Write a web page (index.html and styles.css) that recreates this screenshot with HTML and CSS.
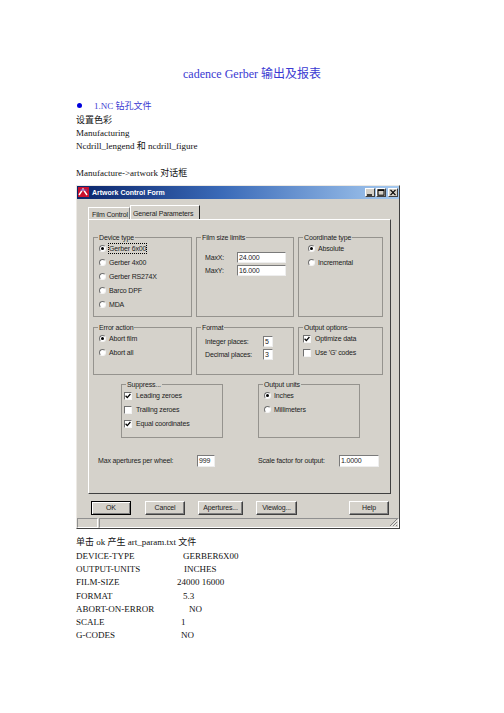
FILE: index.html
```html
<!DOCTYPE html>
<html lang="zh-CN">
<head>
  <meta charset="UTF-8" />
  <meta name="viewport" content="width=device-width, initial-scale=1.0"/>
  <title>cadence Gerber 输出及报表</title>
  <link rel="stylesheet" href="styles.css">
</head>
<body>

  <div class="page">
    <h1 class="doc-title">cadence Gerber 输出及报表</h1>

    <ul class="bullets">
      <li>1.NC 钻孔文件</li>
    </ul>
    <p class="line">设置色彩</p>
    <p class="line">Manufacturing</p>
    <p class="line">Ncdrill_lengend 和 ncdrill_figure</p>
    <p class="line"></p>
    <p class="line">Manufacture-&gt;artwork 对话框</p>

    <!-- Artwork dialog -->
    <div class="window">
      <div class="titlebar">
        <svg class="app-icon" width="11" height="10" viewBox="0 0 11 10">
          <rect x="0" y="0" width="11" height="10" fill="#c8102e"/>
          <path d="M1 8 L5 2 L9 8" stroke="#fff" stroke-width="1.4" fill="none"/>
          <path d="M2 3 H9" stroke="#7a3fa0" stroke-width="1.2"/>
        </svg>
        <span class="title-text">Artwork Control Form</span>
        <div class="win-controls">
          <span class="ctl">
            <svg width="8" height="7" viewBox="0 0 8 7"><path d="M1 6 H6" stroke="#000" stroke-width="1.4"/></svg>
          </span>
          <span class="ctl">
            <svg width="8" height="7" viewBox="0 0 8 7"><rect x="1" y="0.8" width="6" height="5.4" stroke="#000" stroke-width="1" fill="none"/><path d="M1 1.3 H7" stroke="#000" stroke-width="1.2"/></svg>
          </span>
          <span class="ctl close">
            <svg width="8" height="7" viewBox="0 0 8 7"><path d="M1.5 0.8 L6.5 6.2 M6.5 0.8 L1.5 6.2" stroke="#000" stroke-width="1.2"/></svg>
          </span>
        </div>
      </div>

      <div class="tabs">
        <span class="tab">Film Control</span>
        <span class="tab active">General Parameters</span>
      </div>

      <div class="panel">
        <div class="row row-top">
          <fieldset class="group w-wide">
            <legend>Device type</legend>
            <div class="opt"><span class="radio on"></span><span class="focus">Gerber 6x00</span></div>
            <div class="opt"><span class="radio"></span>Gerber 4x00</div>
            <div class="opt"><span class="radio"></span>Gerber RS274X</div>
            <div class="opt"><span class="radio"></span>Barco DPF</div>
            <div class="opt"><span class="radio"></span>MDA</div>
          </fieldset>
          <fieldset class="group w-mid">
            <legend>Film size limits</legend>
            <div class="fields film">
              <div class="field"><span class="field-label w-film">MaxX:</span><span class="input w-long">24.000</span></div>
              <div class="field"><span class="field-label w-film">MaxY:</span><span class="input w-long">16.000</span></div>
            </div>
          </fieldset>
          <fieldset class="group w-narrow">
            <legend>Coordinate type</legend>
            <div class="indent">
              <div class="opt"><span class="radio on"></span>Absolute</div>
              <div class="opt"><span class="radio"></span>Incremental</div>
            </div>
          </fieldset>
        </div>

        <div class="row row-mid">
          <fieldset class="group w-wide">
            <legend>Error action</legend>
            <div class="opt"><span class="radio on"></span>Abort film</div>
            <div class="opt"><span class="radio"></span>Abort all</div>
          </fieldset>
          <fieldset class="group w-mid">
            <legend>Format</legend>
            <div class="fields format">
              <div class="field"><span class="field-label w-format">Integer places:</span><span class="input w-tiny">5</span></div>
              <div class="field"><span class="field-label w-format">Decimal places:</span><span class="input w-tiny">3</span></div>
            </div>
          </fieldset>
          <fieldset class="group w-narrow">
            <legend>Output options</legend>
            <div class="pull">
              <div class="opt"><span class="check on"><svg width="6" height="6" viewBox="0 0 6 6"><path d="M0.6 2.8 L2.3 4.6 L5.4 1" stroke="#000" stroke-width="1.3" fill="none"/></svg></span>Optimize data</div>
              <div class="opt"><span class="check"></span>Use 'G' codes</div>
            </div>
          </fieldset>
        </div>

        <div class="row row-bottom">
          <fieldset class="group w-box">
            <legend>Suppress...</legend>
            <div class="pull-more">
              <div class="opt"><span class="check on"><svg width="6" height="6" viewBox="0 0 6 6"><path d="M0.6 2.8 L2.3 4.6 L5.4 1" stroke="#000" stroke-width="1.3" fill="none"/></svg></span>Leading zeroes</div>
              <div class="opt"><span class="check"></span>Trailing zeroes</div>
              <div class="opt"><span class="check on"><svg width="6" height="6" viewBox="0 0 6 6"><path d="M0.6 2.8 L2.3 4.6 L5.4 1" stroke="#000" stroke-width="1.3" fill="none"/></svg></span>Equal coordinates</div>
            </div>
          </fieldset>
          <fieldset class="group w-box">
            <legend>Output units</legend>
            <div class="opt"><span class="radio on"></span>Inches</div>
            <div class="opt"><span class="radio"></span>Millimeters</div>
          </fieldset>
        </div>

        <div class="row row-param">
          <span class="field-label w-aper">Max apertures per wheel:</span>
          <span class="input w-short">999</span>
          <span class="field-label w-scale">Scale factor for output:</span>
          <span class="input w-scale-in">1.0000</span>
        </div>
      </div>

      <div class="buttons">
        <span class="btn default">OK</span>
        <span class="btn">Cancel</span>
        <span class="btn w-btn-wide">Apertures...</span>
        <span class="btn w-btn-view">Viewlog...</span>
        <span class="btn push">Help</span>
      </div>

      <div class="statusbar">
        <span class="status-cell first"></span>
        <span class="status-cell rest">
          <svg class="grip" width="9" height="9" viewBox="0 0 9 9">
            <path d="M8 1 L1 8 M8 4 L4 8 M8 7 L7 8" stroke="#808080" stroke-width="1"/>
            <path d="M8.8 1.8 L1.8 8.8 M8.8 4.8 L4.8 8.8" stroke="#fff" stroke-width="0.8"/>
          </svg>
        </span>
      </div>
    </div>

    <div class="report">
      <p class="line">单击 ok 产生 art_param.txt 文件</p>
      <div class="kv"><span class="k">DEVICE-TYPE</span><span class="v o6">GERBER6X00</span></div>
      <div class="kv"><span class="k">OUTPUT-UNITS</span><span class="v o7">INCHES</span></div>
      <div class="kv"><span class="k">FILM-SIZE</span><span class="v">24000 16000</span></div>
      <div class="kv"><span class="k">FORMAT</span><span class="v o6">5.3</span></div>
      <div class="kv"><span class="k">ABORT-ON-ERROR</span><span class="v o12">NO</span></div>
      <div class="kv"><span class="k">SCALE</span><span class="v o4">1</span></div>
      <div class="kv"><span class="k">G-CODES</span><span class="v o4">NO</span></div>
    </div>
  </div>

</body>
</html>
```

FILE: styles.css
```css
body {
  margin: 0;
  background-color: #fff;
}

.page {
  padding: 66px 0 0 76px;
  font-family: "Liberation Serif", "Noto Sans CJK SC", serif;
  font-size: 9px;
  line-height: 13.3px;
  color: #111;
}

.doc-title {
  margin: 0 0 0 -76px;
  width: 504px;
  text-align: center;
  font-size: 12px;
  line-height: 16px;
  font-weight: normal;
  color: #3a3ad2;
}

.bullets {
  margin: 18.35px 0 0;
  padding: 0;
  list-style: none;
  color: #3a3ad2;
}

.bullets li::before {
  content: "";
  display: inline-block;
  width: 5px;
  height: 5px;
  border-radius: 50%;
  background-color: #0000dd;
  margin: 0 12px 0 1px;
  vertical-align: 1px;
}

.line {
  margin: 0;
  height: 13.3px;
  white-space: nowrap;
}

/* Dialog window */
.window {
  margin-top: 4.85px;
  width: 324px;
  height: 344px;
  box-sizing: border-box;
  border: 1px solid;
  border-color: #ece9e4 #404040 #404040 #ece9e4;
  background-color: #d5d2cb;
  font-family: "Liberation Sans", Arial, sans-serif;
  font-size: 7px;
  letter-spacing: -0.15px;
  line-height: 9px;
  color: #1c1c1c;
  display: flex;
  flex-direction: column;
}

.titlebar {
  height: 13px;
  display: flex;
  align-items: center;
  padding-left: 1px;
  background: linear-gradient(90deg, #0a246a 0%, #3a6ab8 45%, #a6caf0 100%);
}

.app-icon {
  display: block;
  margin-right: 3px;
}

.title-text {
  color: #fff;
  font-weight: bold;
  letter-spacing: 0;
}

.win-controls {
  margin-left: auto;
  display: flex;
  gap: 1px;
  padding-right: 1px;
}

.ctl {
  width: 10px;
  height: 9px;
  box-sizing: border-box;
  background-color: #d4d0c8;
  border: 1px solid;
  border-color: #fff #404040 #404040 #fff;
  display: flex;
  align-items: center;
  justify-content: center;
}

.ctl.close {
  margin-left: 1px;
}

.tabs {
  margin-top: 6px;
  height: 14px;
  padding-left: 11px;
  display: flex;
  align-items: flex-end;
}

.tab {
  height: 12px;
  box-sizing: border-box;
  width: 42px;
  padding: 2px 0 0 3px;
  border: 1px solid;
  border-bottom: none;
  border-color: #fff #808080 #808080 #fff;
  white-space: nowrap;
}

.tab.active {
  height: 14px;
  width: 70px;
  padding: 3px 0 0 2px;
  border-right-color: #202020;
}

.panel {
  margin-left: 11px;
  width: 303px;
  height: 275px;
  box-sizing: border-box;
  border: 1px solid;
  border-color: #fff #404040 #404040 #fff;
  padding: 13px 0 0 4px;
}

.row {
  display: flex;
  gap: 4px;
}

.row-top {
  height: 84px;
}

.row-mid {
  margin-top: 6px;
  height: 52px;
}

.row-bottom {
  margin-top: 5px;
  height: 58px;
  padding-left: 28px;
  gap: 35px;
}

.row-param {
  margin-top: 17px;
  height: 12px;
  padding-left: 5px;
  gap: 0;
  align-items: center;
}

.group {
  margin: 0;
  padding: 0 0 0 5px;
  min-width: 0;
  box-sizing: border-box;
  border: 1px solid #95938e;
}

.group legend {
  padding: 0 1px;
  margin-left: -1px;
  line-height: 9px;
  white-space: nowrap;
}

.w-wide { width: 99px; }
.w-mid { width: 98px; }
.w-narrow { width: 85px; }
.w-box { width: 102px; }

.opt {
  height: 14px;
  display: flex;
  align-items: center;
  white-space: nowrap;
}

.indent {
  padding-left: 4px;
}

.pull {
  margin-left: -1px;
}

.pull-more {
  margin-left: -3px;
}

.focus {
  outline: 1px dotted #000;
  outline-offset: 0;
}

.radio {
  width: 7px;
  height: 7px;
  box-sizing: border-box;
  border-radius: 50%;
  border: 1px solid;
  border-color: #707070 #f4f4f4 #f4f4f4 #707070;
  background-color: #fff;
  margin-right: 3px;
  display: flex;
  align-items: center;
  justify-content: center;
}

.radio.on::after {
  content: "";
  width: 3px;
  height: 3px;
  border-radius: 50%;
  background-color: #000;
}

.check {
  width: 8px;
  height: 8px;
  box-sizing: border-box;
  border: 1px solid;
  border-color: #707070 #f4f4f4 #f4f4f4 #707070;
  background-color: #fff;
  margin-right: 4px;
  display: flex;
  align-items: center;
  justify-content: center;
}

.fields {
  display: flex;
  flex-direction: column;
  gap: 2px;
}

.fields.film {
  padding-top: 10px;
}

.fields.format {
  padding-top: 4px;
}

.field {
  height: 11px;
  display: flex;
  align-items: center;
  padding-left: 3px;
}

.field-label {
  white-space: nowrap;
}

.w-film { width: 32px; }
.w-format { width: 58px; }
.w-aper { width: 99px; }
.w-scale { width: 81px; margin-left: 43px; }

.input {
  height: 11px;
  box-sizing: border-box;
  background-color: #fff;
  border: 1px solid;
  border-color: #7a7a7a #eeeeee #eeeeee #7a7a7a;
  padding-left: 1px;
  line-height: 9px;
  white-space: nowrap;
}

.row-param .input {
  height: 12px;
  line-height: 10px;
}

.w-long { width: 49px; }
.w-tiny { width: 10px; }
.w-short { width: 18px; }
.w-scale-in { width: 40px; }

/* Bottom buttons */
.buttons {
  margin-top: 7px;
  height: 14px;
  padding-left: 14px;
  display: flex;
  gap: 14px;
}

.btn {
  width: 40px;
  height: 14px;
  box-sizing: border-box;
  border: 1px solid;
  border-color: #fff #404040 #404040 #fff;
  box-shadow: inset -1px -1px 0 #808080;
  text-align: center;
  line-height: 12px;
  white-space: nowrap;
}

.btn.default {
  border-color: #000;
  box-shadow: inset 1px 1px 0 #fff, inset -1px -1px 0 #808080;
}

.w-btn-wide { width: 45px; margin-left: -1px; }
.w-btn-view { width: 41px; margin-left: -1px; }

.btn.push {
  margin-left: 38px;
}

.statusbar {
  margin-top: 3px;
  height: 10px;
  display: flex;
  gap: 1px;
}

.status-cell {
  box-sizing: border-box;
  border: 1px solid;
  border-color: #909090 #fff #fff #909090;
  height: 10px;
}

.status-cell.first {
  width: 21px;
}

.status-cell.rest {
  flex: 1;
  display: flex;
  justify-content: flex-end;
  align-items: flex-end;
}

.grip {
  display: block;
}

/* Generated file listing */
.report {
  margin-top: 7.35px;
}

.kv {
  display: flex;
  height: 13.3px;
  white-space: nowrap;
}

.kv .k {
  width: 101px;
}

.v.o4 { padding-left: 4px; }
.v.o6 { padding-left: 6px; }
.v.o7 { padding-left: 7px; }
.v.o12 { padding-left: 12px; }
```
